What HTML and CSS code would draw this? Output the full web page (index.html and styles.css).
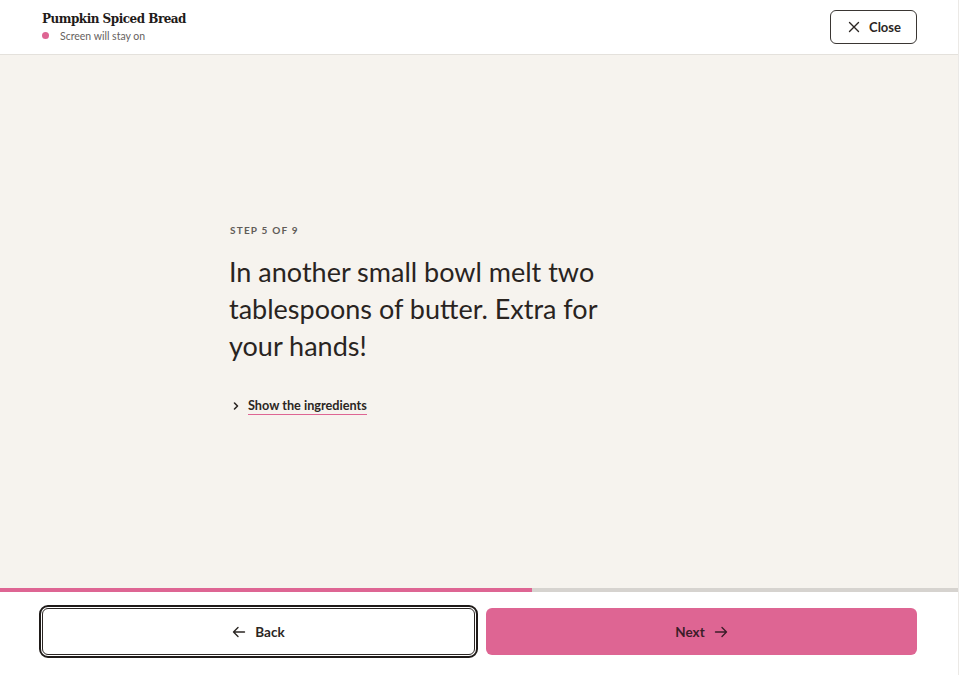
FILE: index.html
```html
<!DOCTYPE html>
<html lang="en">
<head>
  <meta charset="UTF-8" />
  <title>Pumpkin Spiced Bread - Cook mode</title>
  <link rel="stylesheet" href="styles.css">
</head>
<body>

  <div class="page">

    <!-- HEADER -->
    <header class="topbar">
      <div class="recipe-info">
        <h1 class="recipe-title">Pumpkin Spiced Bread</h1>
        <div class="wake-note"><span class="dot"></span>Screen will stay on</div>
      </div>
      <button class="close-button">
        <svg width="12" height="12" viewBox="0 0 12 12" fill="none" stroke="currentColor" stroke-width="1.4" stroke-linecap="round">
          <path d="M1.5 1.5 L10.5 10.5 M10.5 1.5 L1.5 10.5"/>
        </svg>
        Close
      </button>
    </header>

    <!-- STEP -->
    <main class="step-area">
      <div class="step">
        <div class="step-count">STEP 5 OF 9</div>
        <p class="step-text">In another small bowl melt two tablespoons of butter. Extra for your hands!</p>
        <a class="ingredients-toggle" href="#">
          <svg width="8" height="10" viewBox="0 0 8 10" fill="none" stroke="currentColor" stroke-width="1.6" stroke-linecap="round" stroke-linejoin="round">
            <path d="M2.5 2 L5.5 5 L2.5 8"/>
          </svg>
          <span>Show the ingredients</span>
        </a>
      </div>
    </main>

    <!-- PROGRESS -->
    <div class="progress"><div class="progress-fill" style="width: 55.5%;"></div></div>

    <!-- FOOTER NAV -->
    <footer class="step-nav">
      <button class="nav-button back">
        <svg width="14" height="12" viewBox="0 0 14 12" fill="none" stroke="currentColor" stroke-width="1.4" stroke-linecap="round" stroke-linejoin="round">
          <path d="M12.5 6 H1.5 M6 1.5 L1.5 6 L6 10.5"/>
        </svg>
        Back
      </button>
      <button class="nav-button next">
        Next
        <svg width="14" height="12" viewBox="0 0 14 12" fill="none" stroke="currentColor" stroke-width="1.4" stroke-linecap="round" stroke-linejoin="round">
          <path d="M1.5 6 H12.5 M8 1.5 L12.5 6 L8 10.5"/>
        </svg>
      </button>
    </footer>

  </div>

</body>
</html>
```

FILE: styles.css
```css
/* ------------------------------
   GENERAL
-------------------------------*/
body {
  margin: 0;
  padding: 0;
  font-family: Lato, "Noto Sans", sans-serif;
  color: #2b2623;
  background: #fff;
}

.page {
  display: flex;
  flex-direction: column;
  height: 675px;
  width: 958px;
  border-right: 1px solid #ebe9e6;
}

/* ---------------
   HEADER
   ---------------*/
.topbar {
  display: flex;
  justify-content: space-between;
  align-items: center;
  height: 55px;
  padding: 0 41px 0 42px;
  border-bottom: 1px solid #e4e1dc;
  box-sizing: border-box;
  flex-shrink: 0;
}

.recipe-info {
  margin-top: -2px;
}

.recipe-title {
  margin: 0;
  font-family: "DejaVu Serif", serif;
  font-weight: bold;
  font-size: 12px;
  letter-spacing: -0.5px;
  color: #1f1b19;
  line-height: 16px;
}

.wake-note {
  display: flex;
  align-items: center;
  margin-top: 3px;
  font-size: 10.5px;
  color: #66625e;
}

.dot {
  width: 7px;
  height: 7px;
  border-radius: 50%;
  background: #de6593;
  margin-right: 11px;
}

.close-button {
  display: flex;
  align-items: center;
  gap: 9px;
  height: 34px;
  padding: 0 15px 0 17px;
  background: #fff;
  border: 1px solid #3a3633;
  border-radius: 6px;
  font-family: Lato, sans-serif;
  font-weight: bold;
  font-size: 13px;
  color: #2b2623;
  margin-top: -1px;
}

/* ---------------
   STEP
   ---------------*/
.step-area {
  flex: 1;
  background: #f6f3ee;
  display: flex;
  align-items: center;
  justify-content: center;
}

.step {
  width: 500px;
  margin-top: -4px;
}

.step-count {
  font-size: 10px;
  font-weight: bold;
  letter-spacing: 1.2px;
  color: #615c58;
  padding-left: 1px;
}

.step-text {
  max-width: 400px;
  margin: 17px 0 0;
  font-size: 27px;
  line-height: 37px;
  color: #29241f;
}

.ingredients-toggle {
  display: inline-flex;
  align-items: center;
  gap: 8px;
  margin-top: 33px;
  margin-left: 3px;
  font-size: 12.7px;
  font-weight: bold;
  color: #2b2623;
  text-decoration: none;
}

.ingredients-toggle span {
  border-bottom: 1.5px solid #de6593;
  padding-bottom: 1px;
}

/* ---------------
   PROGRESS
   ---------------*/
.progress {
  height: 4px;
  background: #d6d3cf;
  flex-shrink: 0;
}

.progress-fill {
  height: 100%;
  background: #de6593;
}

/* ---------------
   FOOTER NAV
   ---------------*/
.step-nav {
  display: flex;
  gap: 11px;
  padding: 16px 41px 20px 42px;
  height: 83px;
  box-sizing: border-box;
  flex-shrink: 0;
}

.nav-button {
  flex: 1;
  display: flex;
  align-items: center;
  justify-content: center;
  gap: 9px;
  height: 47px;
  border-radius: 6px;
  font-family: Lato, sans-serif;
  font-weight: bold;
  font-size: 13.5px;
}

.nav-button.back {
  background: #fff;
  border: 1px solid #2b2623;
  color: #2b2623;
  outline: 2px solid #1f1b19;
  outline-offset: 1px;
}

.nav-button.next {
  background: #de6593;
  border: none;
  color: #3b1d29;
}
```
